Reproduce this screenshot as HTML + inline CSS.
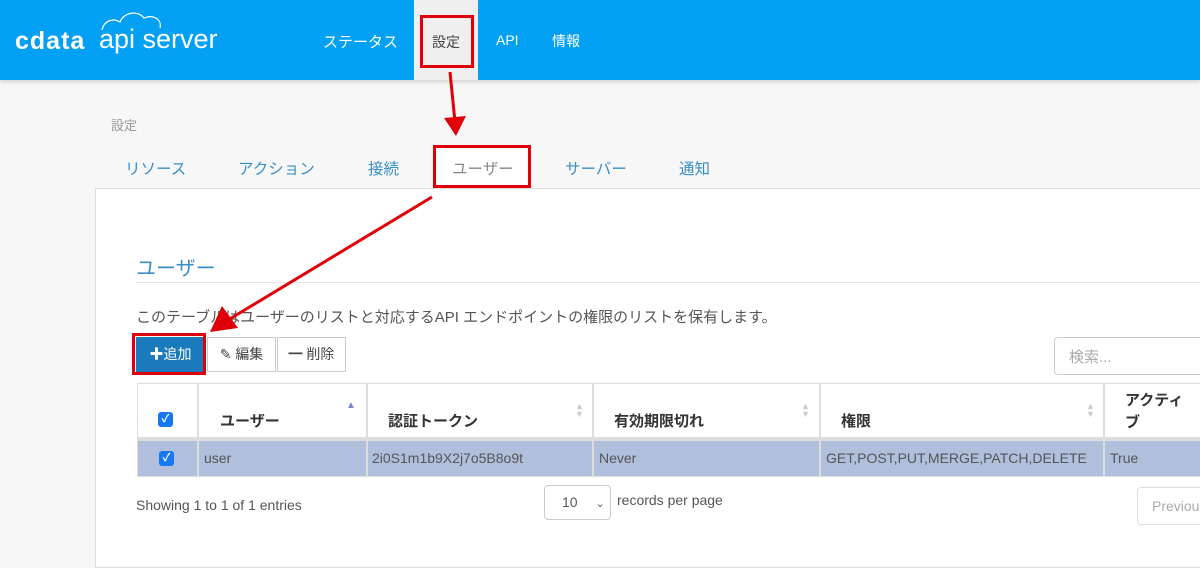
<!DOCTYPE html>
<html><head><meta charset="utf-8">
<style>
*{margin:0;padding:0;box-sizing:border-box}
body{width:1200px;height:555px;overflow:hidden;background:#f7f7f7;font-family:"Liberation Sans","Noto Sans CJK JP",sans-serif;position:relative;color:#555}
.a{position:absolute;white-space:nowrap}
.hdr{left:0;top:0;width:1200px;height:80px;background:#03a0f4;box-shadow:0 2px 4px rgba(0,0,0,.15)}
.nav{color:#fff;font-size:15px;top:31px}
.tab{font-size:15.5px;color:#3a8fc8;top:157px}
.th{font-size:15px;font-weight:bold;color:#333}
.td{font-size:14px;color:#555}
.cb{width:15px;height:15px;background:#1877f2;border-radius:3px;color:#fff;font-size:11px;line-height:15px;text-align:center;font-weight:bold}
.sort{color:#ccc;font-size:9px;line-height:8px}
</style></head><body>
<div class="a hdr"></div>
<div class="a" style="left:15px;top:27px;color:#fff;font-size:25px;font-weight:bold;letter-spacing:1px">cdata</div>
<div class="a" style="left:99px;top:24px;color:#fff;font-size:27px;font-weight:300;letter-spacing:0">api server</div>
<svg class="a" style="left:98px;top:8px" width="90" height="24"><path d="M4 22 C6 12 16 10 22 14 C26 4 40 2 46 10 C56 6 64 12 62 20" stroke="#fff" stroke-width="1.2" fill="none"/></svg>
<div class="a nav" style="left:323px">ステータス</div>
<div class="a" style="left:414px;top:0;width:64px;height:80px;background:#efefef"></div>
<div class="a nav" style="left:432px;color:#444;font-size:14px;top:32px">設定</div>
<div class="a" style="left:420px;top:15px;width:54px;height:53px;border:3px solid #e0000a"></div>
<div class="a nav" style="left:496px;font-size:14px;top:32px">API</div>
<div class="a nav" style="left:552px;font-size:14px">情報</div>

<div class="a" style="left:111px;top:115px;font-size:13px;color:#999">設定</div>
<div class="a tab" style="left:125px">リソース</div>
<div class="a tab" style="left:238px">アクション</div>
<div class="a tab" style="left:368px">接続</div>
<div class="a" style="left:95px;top:188px;width:1110px;height:380px;background:#fff;border:1px solid #ddd"></div>
<div class="a" style="left:433px;top:145px;width:98px;height:43px;background:#fff;border:3px solid #e0000a"></div>
<div class="a tab" style="left:452px;color:#888">ユーザー</div>
<div class="a tab" style="left:565px">サーバー</div>
<div class="a tab" style="left:679px">通知</div>

<div class="a" style="left:136px;top:252px;font-size:20px;color:#3a8fc8">ユーザー</div>
<div class="a" style="left:136px;top:282px;width:1070px;height:1px;background:#e5e5e5"></div>
<div class="a" style="left:136px;top:306px;font-size:15px;color:#555">このテーブルはユーザーのリストと対応するAPI エンドポイントの権限のリストを保有します。</div>

<div class="a" style="left:136px;top:337px;width:69px;height:35px;background:#1a7abc;color:#fff;font-size:14px;line-height:35px;text-align:center">✚追加</div>
<div class="a" style="left:132px;top:333px;width:74px;height:42px;border:3px solid #e0000a"></div>
<div class="a" style="left:207px;top:337px;width:69px;height:35px;border:1px solid #ccc;font-size:14px;line-height:33px;text-align:center;color:#444">✎ 編集</div>
<div class="a" style="left:277px;top:337px;width:69px;height:35px;border:1px solid #ccc;font-size:14px;line-height:33px;text-align:center;color:#444">━ 削除</div>
<div class="a" style="left:1054px;top:337px;width:160px;height:38px;border:1px solid #ccc;border-radius:4px;font-size:15px;color:#aaa;padding:8px 14px">検索...</div>

<div class="a" style="left:137px;top:383px;width:1070px;height:94px;border:1px solid #ddd"></div>
<div class="a" style="left:138px;top:437px;width:1068px;height:4px;background:#ddd"></div>
<div class="a" style="left:138px;top:441px;width:1068px;height:35px;background:#b0bfdc"></div>
<div class="a" style="left:197px;top:383px;width:2px;height:94px;background:#ddd"></div>
<div class="a" style="left:366px;top:383px;width:2px;height:94px;background:#ddd"></div>
<div class="a" style="left:592px;top:383px;width:2px;height:94px;background:#ddd"></div>
<div class="a" style="left:819px;top:383px;width:2px;height:94px;background:#ddd"></div>
<div class="a" style="left:1103px;top:383px;width:2px;height:94px;background:#ddd"></div>

<div class="a cb" style="left:158px;top:412px">✓</div>
<div class="a th" style="left:220px;top:410px">ユーザー</div>
<div class="a" style="left:346px;top:400px;color:#7b82d6;font-size:10px">▲</div>
<div class="a th" style="left:388px;top:410px">認証トークン</div>
<div class="a sort" style="left:575px;top:402px">▲<br>▼</div>
<div class="a th" style="left:614px;top:410px">有効期限切れ</div>
<div class="a sort" style="left:801px;top:402px">▲<br>▼</div>
<div class="a th" style="left:841px;top:410px">権限</div>
<div class="a sort" style="left:1086px;top:402px">▲<br>▼</div>
<div class="a th" style="left:1125px;top:390px;line-height:22px">アクティ<br>ブ</div>

<div class="a cb" style="left:159px;top:451px">✓</div>
<div class="a td" style="left:204px;top:450px">user</div>
<div class="a td" style="left:372px;top:450px">2i0S1m1b9X2j7o5B8o9t</div>
<div class="a td" style="left:599px;top:450px">Never</div>
<div class="a td" style="left:826px;top:450px">GET,POST,PUT,MERGE,PATCH,DELETE</div>
<div class="a td" style="left:1110px;top:450px">True</div>

<div class="a" style="left:136px;top:497px;font-size:14px;color:#555">Showing 1 to 1 of 1 entries</div>
<div class="a" style="left:544px;top:485px;width:67px;height:35px;border:1px solid #ccc;border-radius:4px;font-size:14px;color:#555;padding:8px 0 0 17px">10 <span style="margin-left:14px;font-size:11px">⌄</span></div>
<div class="a" style="left:617px;top:492px;font-size:14px;color:#555">records per page</div>
<div class="a" style="left:1137px;top:487px;width:80px;height:38px;border:1px solid #ddd;border-radius:4px;font-size:14px;color:#aaa;padding:10px 14px">Previous</div>

<svg class="a" style="left:0;top:0" width="1200" height="555">
<line x1="450" y1="72" x2="455" y2="122" stroke="#e0000a" stroke-width="3"/>
<polygon points="444,118 466,116 456,136" fill="#e0000a"/>
<line x1="432" y1="197" x2="228" y2="320" stroke="#e0000a" stroke-width="3"/>
<polygon points="222,306 238,328 210,332" fill="#e0000a"/>
</svg>
</body></html>
